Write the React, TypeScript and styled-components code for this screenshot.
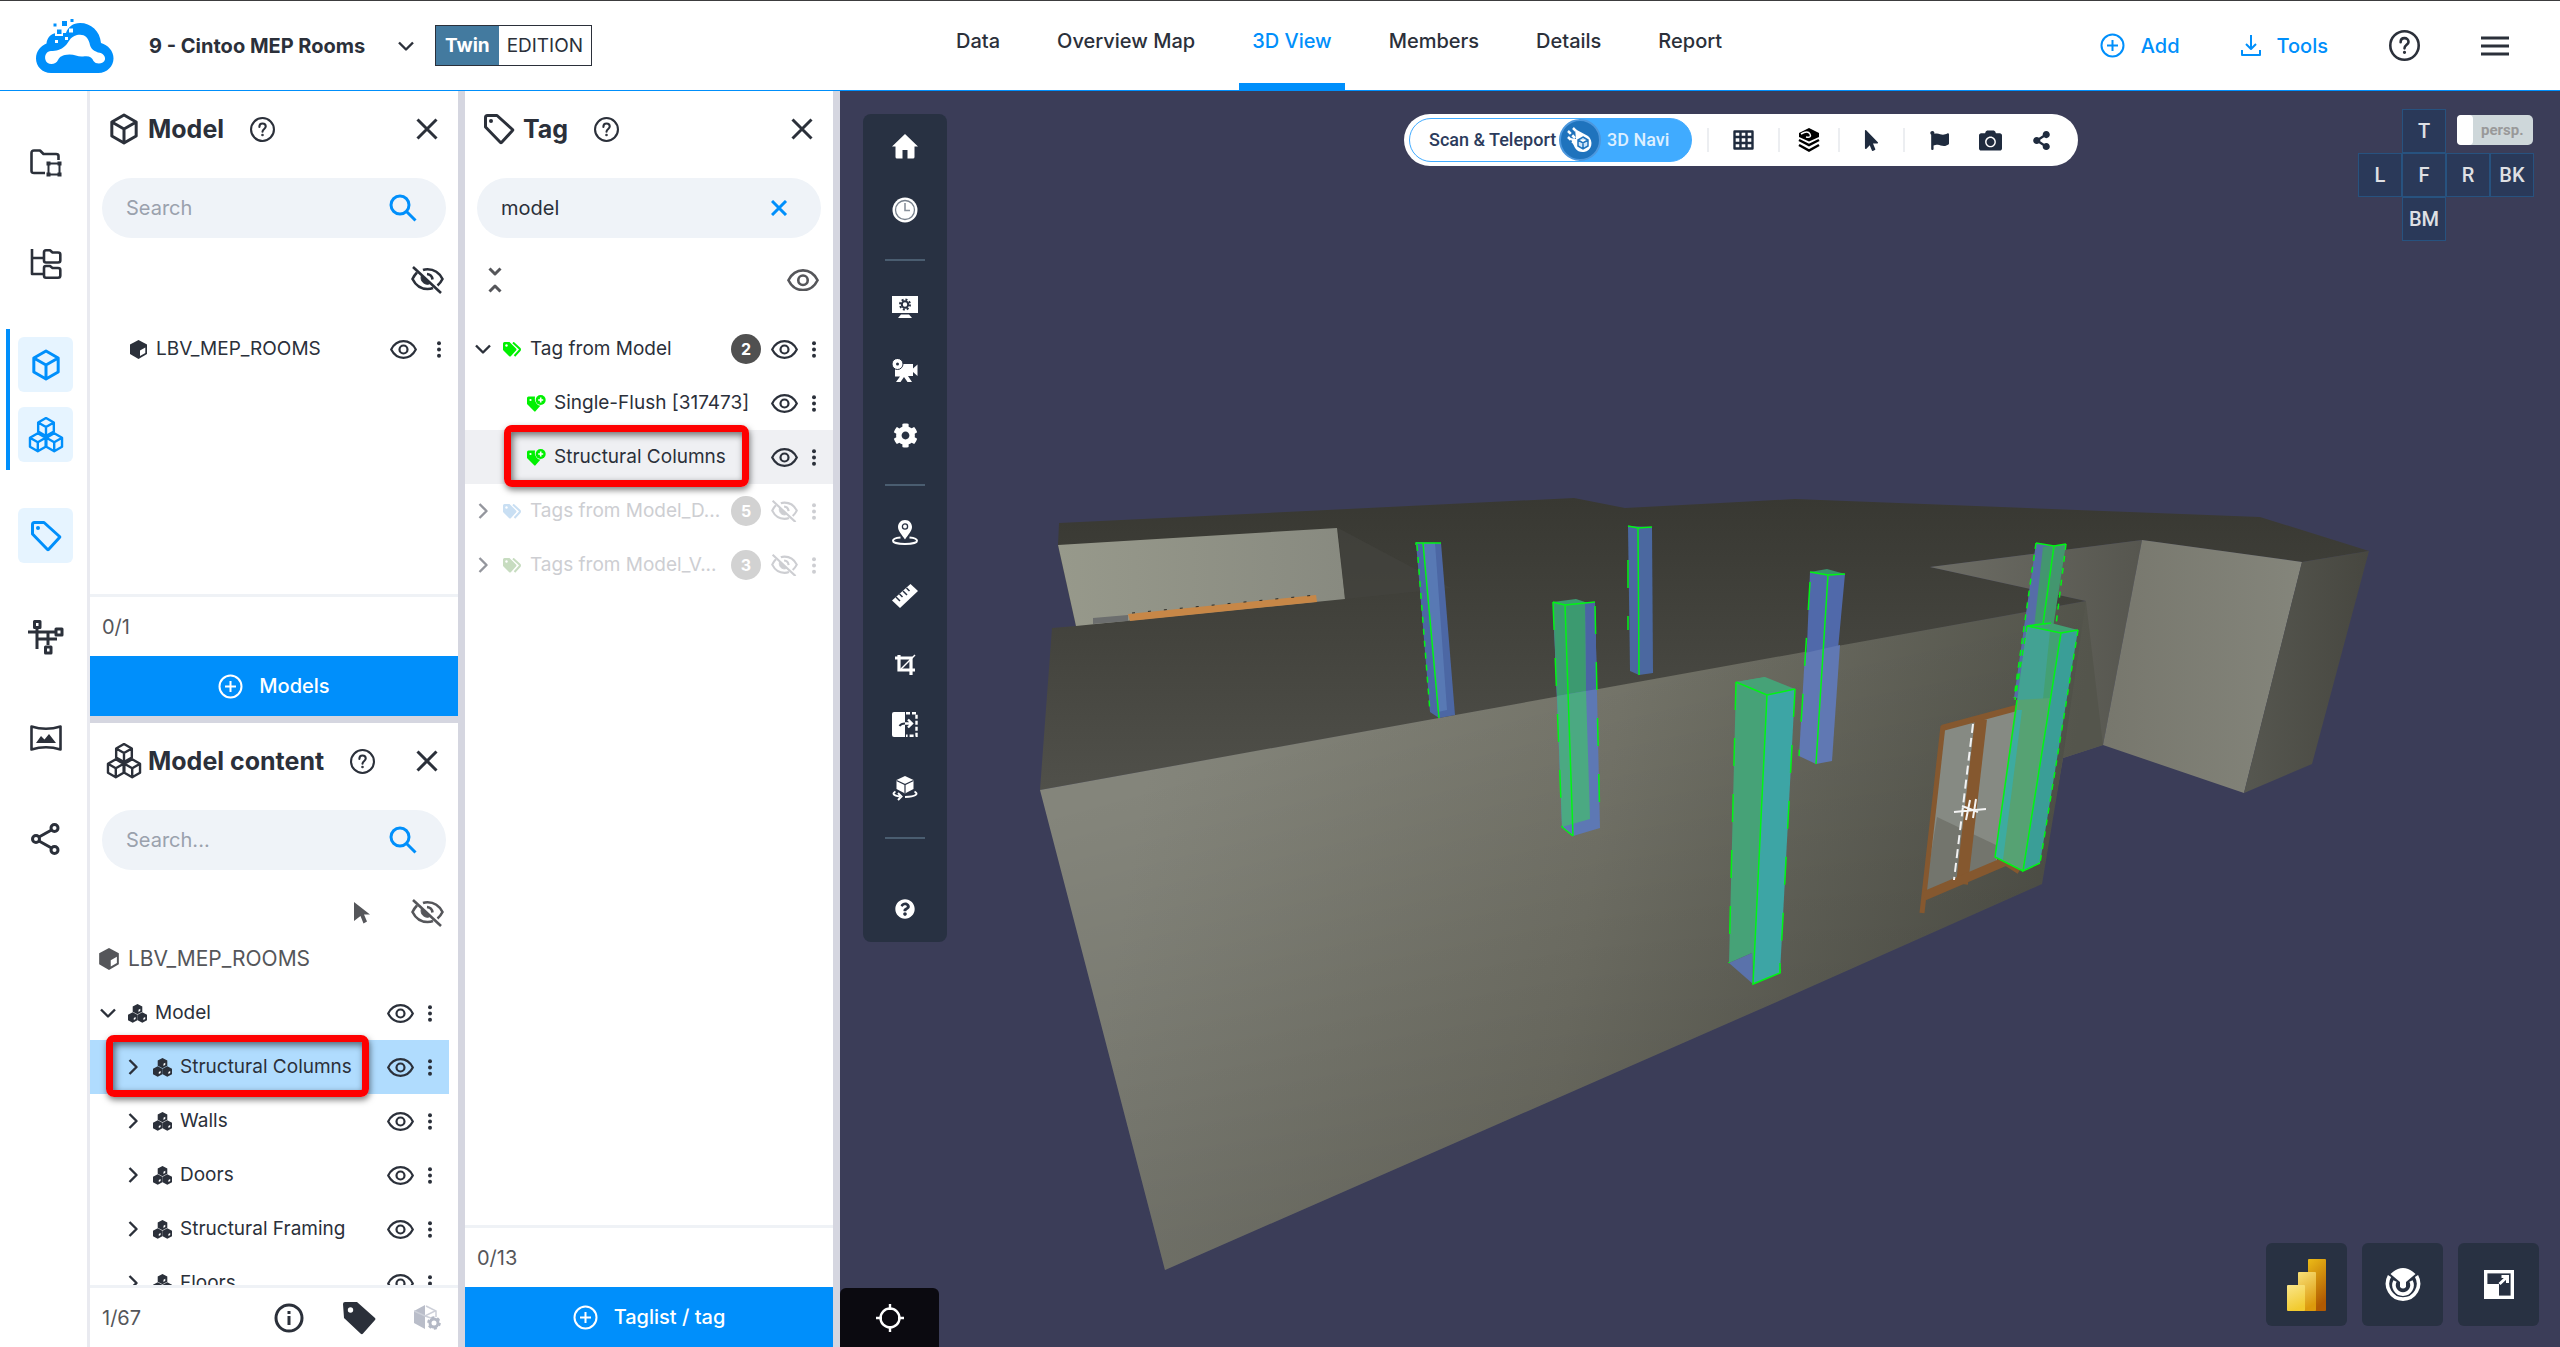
import React from "react";
import styled, { createGlobalStyle, css } from "styled-components";
import { FaCamera, FaCog, FaFlag, FaMousePointer, FaQuestionCircle, FaShareAlt } from "react-icons/fa";

const ink = "#2b303a";
const blue = "#008ffb";
const grey = "#55565a";
const night = "#283142";

const GlobalStyle = createGlobalStyle`
  * { box-sizing: border-box; }
  html, body, #root { height: 100%; }
  body {
    margin: 0;
    background: #fff;
    color: ${ink};
    font-family: Inter, "Open Sans", sans-serif;
    font-size: 19px;
    line-height: 28px;
    overflow: hidden;
  }
  button, input, select { font: inherit; color: inherit; }
  button { border: 0; padding: 0; background: none; cursor: pointer; }
  a { color: inherit; text-decoration: none; }
  svg { display: block; flex: none; }
`;

/* ---------- icons ---------- */

type IconProps = { size?: number; color?: string };
type GlyphProps = { w: number; h: number; stroke?: number; children: React.ReactNode };

const Glyph = ({ w, h, stroke = 2, children }: GlyphProps) => (
  <svg width={w} height={h} viewBox={`0 0 ${w} ${h}`} fill="none" stroke="currentColor" strokeWidth={stroke} strokeLinejoin="round" aria-hidden="true">
    {children}
  </svg>
);

const cubePath = (cx: number, cy: number, r: number) => {
  const w = r * 0.87;
  const h = r / 2;
  return `M${cx} ${cy - r}L${cx + w} ${cy - h}V${cy + h}L${cx} ${cy + r}L${cx - w} ${cy + h}V${cy - h}ZM${cx - w} ${cy - h}L${cx} ${cy}L${cx + w} ${cy - h}M${cx} ${cy}V${cy + r}`;
};

const CubeIcon = () => (
  <Glyph w={30} h={32} stroke={3}><path d={cubePath(15, 16, 14)} /></Glyph>
);
const CubesIcon = () => (
  <Glyph w={36} h={36} stroke={2.4}>
    <path d={cubePath(18, 10, 9)} />
    <path d={cubePath(9.8, 25.3, 9)} />
    <path d={cubePath(26.2, 25.3, 9)} />
  </Glyph>
);
const TagIcon = () => (
  <Glyph w={32} h={32} stroke={3}>
    <path d="M2.500 4.500Q2.500 2.500 4.500 2.500H14L29.500 16.500Q30 17 29.500 17.500L18.500 29.500Q18 30 17.500 29.500L2.500 14Z" />
    <circle cx="8" cy="8" r="2" fill="currentColor" stroke="none" />
  </Glyph>
);
const HelpRing = ({ size = 25 }: IconProps) => (
  <svg width={size} height={size} viewBox="0 0 24 24" fill="none" stroke="currentColor" strokeWidth="2" strokeLinecap="round" aria-hidden="true">
    <circle cx="12" cy="12" r="11" />
    <path d="M9 9.500C9 7.500 10.300 6.300 12 6.300s3.100 1.200 3.100 2.900c0 2.200-3.100 2.400-3.100 5" />
    <circle cx="12" cy="17.300" r="0.500" fill="currentColor" strokeWidth="1.500" />
  </svg>
);
const CloseIcon = ({ size = 22 }: IconProps) => (
  <svg width={size} height={size} viewBox="0 0 22 22" stroke="currentColor" strokeWidth="3" aria-hidden="true"><path d="M1.500 1.500L20.500 20.500M20.500 1.500L1.500 20.500" /></svg>
);
const SearchIcon = () => (
  <Glyph w={28} h={28} stroke={3}><circle cx="11" cy="11" r="9" /><path d="M17.500 17.500L26.500 26.500" /></Glyph>
);
const Eye = ({ size = 27 }: IconProps) => (
  <svg width={size} height={(size * 19) / 27} viewBox="0 0 27 19" fill="none" stroke="currentColor" strokeWidth="2.200" aria-hidden="true">
    <path d="M1.200 9.500C4 4 8.500 1.200 13.500 1.200S23 4 25.800 9.500C23 15 18.500 17.800 13.500 17.800S4 15 1.200 9.500Z" />
    <circle cx="13.500" cy="9.500" r="4" />
  </svg>
);
const EyeOff = ({ size = 33 }: IconProps) => (
  <svg width={size} height={(size * 28) / 33} viewBox="0 0 33 28" fill="none" stroke="currentColor" strokeWidth="2.600" aria-hidden="true">
    <path d="M2 1L30 27" />
    <path d="M6 6.500Q3.500 9 1.500 13C5 20 10.500 23 16.500 23Q19.500 23 22 22M12 4Q14 3.200 16.500 3.200C22.500 3.200 28 6 31.500 13Q29.500 17 26.500 19.500" />
    <path d="M10.500 9.500C9 13 11.500 18.500 17 18.300L19 17.500Z" fill="currentColor" strokeWidth="1" />
    <path d="M16 8Q21 8.500 21.500 13.500" />
  </svg>
);
const Dots = () => (
  <svg width="6" height="17" viewBox="0 0 6 17" fill="currentColor" aria-hidden="true"><circle cx="3" cy="2.200" r="2" /><circle cx="3" cy="8.500" r="2" /><circle cx="3" cy="14.800" r="2" /></svg>
);
const ChevronDown = () => <Glyph w={16} h={10} stroke={2.4}><path d="M1 1.500L8 8.500L15 1.500" /></Glyph>;
const ChevronRight = () => <Glyph w={10} h={16} stroke={2.4}><path d="M1.500 1L8.500 8L1.500 15" /></Glyph>;
const SolidCube = ({ size = 19 }: IconProps) => (
  <svg width={size} height={size} viewBox="0 0 19 19" aria-hidden="true">
    <path d="M9.500 0L18 4.500V14L9.500 19L1 14V4.500Z" fill="currentColor" />
    <path d="M11 10.500L16.300 7.500V13L11 16Z" fill="#fff" />
  </svg>
);
const SolidCubes = () => (
  <svg width="19" height="19" viewBox="0 0 19 19" aria-hidden="true">
    <path d="M9.500 0L14.300 2.500V7.800L9.500 10.300L4.700 7.800V2.500ZM4.700 8.300L9.400 10.800V16.200L4.700 18.800L0 16.200V10.800ZM14.300 8.300L19 10.800V16.200L14.300 18.800L9.600 16.200V10.800Z" fill="currentColor" />
    <path d="M10.500 5.800L12.300 4.700V6.800L10.500 7.900ZM5.800 14L7.600 12.900V15L5.800 16.100ZM15.400 14L17.200 12.900V15L15.400 16.100Z" fill="#fff" />
  </svg>
);
const TagsIcon = ({ color }: IconProps) => (
  <svg width="19" height="15" viewBox="0 0 19 15" aria-hidden="true">
    <path d="M0 1.500Q0 0 1.500 0H6.500L13 6.500Q14 7.500 13 8.500L8 14Q7 15 6 14L0 8Z" fill={color} />
    <circle cx="3.500" cy="3.500" r="1.200" fill="#fff" />
    <path d="M10 0.500L16.500 6.500Q17.500 7.500 16.500 8.500L11.500 14" fill="none" stroke={color} strokeWidth="2" />
  </svg>
);
const PinnedTag = () => (
  <svg width="19" height="17" viewBox="0 0 19 17" aria-hidden="true">
    <path d="M0 3Q0 1.500 1.500 1.500H8Q7 7 11 10Q12 10.500 13.500 10.500L8.500 16.300Q8 17 7.200 16.200L0 9Z" fill="#00f000" />
    <circle cx="13.700" cy="5" r="5" fill="#00f000" />
    <path d="M11.200 5H16.200M13.700 2.500V7.500" stroke="#fff" strokeWidth="1.600" />
    <circle cx="3.500" cy="5" r="1.100" fill="#fff" />
  </svg>
);
const PlusRing = () => <Glyph w={25} h={25}><circle cx="12.500" cy="12.500" r="11" /><path d="M12.500 7V18M7 12.500H18" /></Glyph>;
const Pointer = () => (
  <svg width="16" height="22" viewBox="0 0 16 22" fill="currentColor" aria-hidden="true"><path d="M0 0L16 12.500H10L13 19.500L9.500 21.500L6.500 14L0 19Z" /></svg>
);

const Logo = () => (
  <svg width="78" height="54" viewBox="0 0 78 54" aria-hidden="true">
    <path fill={blue} d="M15 54C6 54 0 47 0 39.500C0 32 5 26.500 10.500 24.500C11 19 14.500 15 20 14L30 14C32 8 37 4 44 4C55 4 64 12 65 24C72 26 77.500 32 77.500 39.500C77.500 47 71 54 62.500 54Z" />
    <path fill="#fff" d="M15 32C20 32 25 31 29 27C33 24 33 18 41 16C48 14.500 52 18 53.500 24C54.500 29 56 31 62 33.500C67 34 69.500 37 69 40.500C68 45 60 46 57.500 42C56 38 53 36.500 47 37.500C42 38 39 35.500 33.500 35.500C26 36 24 37.500 22 41C20 46 11 46.500 9.500 41C8 36 11 32 15 32Z" />
    <path fill="#fff" d="M19 8.500H27V17H19ZM33 9.500h4v4h-4ZM19 21h3v3h-3ZM29 18h3v3h-3ZM24 0h8v8h-8Z" />
    <path fill={blue} d="M26 2h5v5h-5ZM17.500 4.500h3v3h-3ZM34.500 0h3v3h-3ZM21 10.500h4.500v4.500h-4.500Z" />
  </svg>
);

/* ---------- header ---------- */

const Page = styled.div`
  height: 100vh;
  display: grid;
  grid-template-rows: 91px minmax(0, 1fr);
`;
const TopBar = styled.header`
  display: grid;
  grid-template-columns: 943px 1fr auto;
  border-top: 1px solid #3c3c3e;
  border-bottom: 1px solid ${blue};
  background: #fff;
`;
const Brand = styled.div`
  display: flex;
  align-items: center;
  padding-left: 36px;
`;
const ProjectPicker = styled.label`
  display: flex;
  align-items: center;
  gap: 32px;
  margin-left: 35px;
`;
const ProjectSelect = styled.select`
  appearance: none;
  border: 0;
  padding: 0;
  background: none;
  font-size: 20px;
  font-weight: 700;
`;
const Edition = styled.div`
  display: flex;
  margin-left: 21px;
  height: 41px;
  border: 1px solid ${ink};
  line-height: 39px;
`;
const EditionName = styled.strong`
  padding: 0 9px;
  background: #437a9f;
  color: #fff;
  font-weight: 700;
`;
const EditionText = styled.span`
  padding: 0 8px;
`;
const Tabs = styled.nav`
  display: flex;
  gap: 31px;
`;
const Tab = styled.a<{ $active?: boolean }>`
  display: flex;
  align-items: center;
  padding: 0 13px;
  padding-bottom: ${(p) => (p.$active ? 2 : 9)}px;
  font-size: 20px;
  font-weight: 500;
  color: ${(p) => (p.$active ? blue : ink)};
  border-bottom: ${(p) => (p.$active ? `7px solid ${blue}` : "0")};
`;
const TopActions = styled.div`
  display: flex;
  align-items: center;
  padding-right: 51px;
`;
const TopAction = styled.button`
  display: flex;
  align-items: center;
  gap: 16px;
  margin-right: 61px;
  color: ${blue};
  font-size: 20px;
  font-weight: 500;
`;
const TopIcon = styled.button`
  display: flex;
  & + & { margin-left: 61px; }
`;

/* ---------- body ---------- */

const Workspace = styled.div`
  display: grid;
  grid-template-columns: 83px 368px 368px minmax(0, 1fr);
  column-gap: 7px;
  background: #d5d6e0;
  min-height: 0;
`;
const Rail = styled.nav`
  display: flex;
  flex-direction: column;
  align-items: center;
  gap: 46px;
  padding: 44px 0 0 4px;
  margin-right: -7px;
  border-right: 3px solid #e9eaf0;
  background: #fff;
`;
const RailGroup = styled.div`
  position: relative;
  display: flex;
  flex-direction: column;
  gap: 15px;
  &::before {
    content: "";
    position: absolute;
    left: -12px;
    top: -8px;
    bottom: -8px;
    width: 4px;
    background: ${blue};
  }
`;
const RailButton = styled.button<{ $active?: boolean }>`
  display: flex;
  align-items: center;
  justify-content: center;
  width: 55px;
  height: 55px;
  border-radius: 6px;
  color: ${(p) => (p.$active ? blue : ink)};
  background: ${(p) => (p.$active ? "#e6f4ff" : "transparent")};
`;
const Column = styled.div`
  display: flex;
  flex-direction: column;
  gap: 7px;
  min-height: 0;
`;
const Panel = styled.section<{ $height?: number }>`
  display: flex;
  flex-direction: column;
  min-height: 0;
  background: #fff;
  ${(p) => (p.$height ? css`flex: 0 0 ${p.$height}px;` : css`flex: 1;`)}
`;
const PanelHead = styled.header`
  display: flex;
  align-items: center;
  height: 76px;
  padding: 0 20px 0 14px;
`;
const HeadIcon = styled.span`
  display: flex;
  justify-content: center;
  width: 40px;
`;
const PanelTitle = styled.h2`
  margin: 0 26px 0 4px;
  font-size: 25px;
  font-weight: 700;
`;
const CloseButton = styled.button`
  margin-left: auto;
`;
const SearchBox = styled.label`
  display: flex;
  align-items: center;
  height: 60px;
  margin: 11px 12px 0;
  padding: 0 29px 0 24px;
  border-radius: 30px;
  background: #eff3f8;
  color: ${blue};
`;
const SearchInput = styled.input`
  flex: 1;
  min-width: 0;
  border: 0;
  padding: 0;
  outline: 0;
  background: none;
  color: ${ink};
  font-size: 20px;
  &::placeholder { color: #9aa1ad; opacity: 1; }
`;
const Tools = styled.div<{ $short?: boolean }>`
  display: flex;
  align-items: center;
  justify-content: flex-end;
  gap: 41px;
  height: ${(p) => (p.$short ? 62 : 84)}px;
  padding: ${(p) => (p.$short ? "23px 14px 0" : "0 14px")};
  color: ${(p) => (p.$short ? grey : ink)};
`;
const TagTools = styled(Tools)`
  justify-content: space-between;
  padding-left: 23px;
  color: ${grey};
`;
const Tree = styled.div`
  flex: 1;
  min-height: 0;
  overflow: hidden;
`;
const Row = styled.div<{ $indent?: number; $inset?: number; $fill?: string; $dim?: boolean }>`
  position: relative;
  display: flex;
  align-items: center;
  height: 54px;
  margin-right: ${(p) => p.$inset ?? 0}px;
  padding-left: ${(p) => 8 + (p.$indent ?? 0)}px;
  padding-right: 16px;
  background: ${(p) => p.$fill ?? "transparent"};
  color: ${(p) => (p.$dim ? "#cdced2" : ink)};
`;
const Toggle = styled.button<{ $dim?: boolean }>`
  display: flex;
  justify-content: center;
  width: 20px;
  margin-right: 10px;
  color: ${(p) => (p.$dim ? "#94969d" : ink)};
`;
const RowName = styled.span`
  flex: 1;
  min-width: 0;
  margin-left: 8px;
  white-space: nowrap;
`;
const Count = styled.span<{ $dim?: boolean }>`
  width: 30px;
  margin-right: 10px;
  border-radius: 15px;
  background: ${(p) => (p.$dim ? "#d2d2d2" : "#505050")};
  color: #fff;
  font-size: 16px;
  font-weight: 700;
  line-height: 30px;
  text-align: center;
`;
const RowActions = styled.span<{ $wide?: boolean }>`
  display: flex;
  align-items: center;
  gap: ${(p) => (p.$wide ? 19 : 13)}px;
`;
const Highlight = styled.span<{ $left: number; $width: number }>`
  position: absolute;
  left: ${(p) => p.$left}px;
  top: -5px;
  width: ${(p) => p.$width}px;
  height: 62px;
  border: 7px solid #fe0000;
  border-radius: 8px;
  box-shadow: 1px 3px 6px rgba(0, 0, 0, 0.5), inset 2px 3px 7px rgba(0, 0, 0, 0.55);
  z-index: 1;
  pointer-events: none;
`;
const ModelCaption = styled.div`
  display: flex;
  align-items: center;
  gap: 8px;
  height: 54px;
  padding-left: 8px;
  color: ${grey};
  font-size: 21px;
`;
const PanelFoot = styled.footer`
  display: flex;
  align-items: center;
  height: 62px;
  padding: 0 12px;
  border-top: 3px solid #eff2f6;
  color: ${grey};
  font-size: 20px;
`;
const FootActions = styled.div`
  display: flex;
  align-items: center;
  gap: 38px;
  margin-left: auto;
  padding-right: 5px;
  color: ${ink};
`;
const Primary = styled.button`
  display: flex;
  align-items: center;
  justify-content: center;
  gap: 16px;
  height: 60px;
  background: ${blue};
  color: #fff;
  font-size: 20px;
  font-weight: 500;
`;

/* ---------- viewer ---------- */

const Viewer = styled.main`
  position: relative;
  overflow: hidden;
  background: #3b3d58;
  font-family: Roboto, sans-serif;
`;
const Scene = styled.svg`
  position: absolute;
  inset: 0;
  width: 100%;
  height: 100%;
`;
const SideTools = styled.div`
  position: absolute;
  left: 23px;
  top: 23px;
  display: flex;
  flex-direction: column;
  width: 84px;
  border-radius: 8px;
  background: ${night};
  color: #fff;
`;
const SideButton = styled.button`
  display: flex;
  align-items: center;
  justify-content: center;
  height: 64px;
`;
const SideRule = styled.hr`
  width: 40px;
  height: 2px;
  margin: 17px auto 14px;
  border: 0;
  background: #4a5d70;
`;
const SideHelp = styled(SideButton)`
  height: 89px;
  padding-top: 22px;
`;
const ModeBar = styled.div`
  position: absolute;
  left: 564px;
  top: 23px;
  display: flex;
  align-items: center;
  height: 52px;
  padding: 0 3px 0 5px;
  border-radius: 26px;
  background: #fff;
  color: #1f2b3e;
`;
const ModeSwitch = styled.div`
  display: flex;
  align-items: center;
  width: 283px;
  height: 44px;
  margin-right: 15px;
  border: 1px solid #40abff;
  border-radius: 22px;
  background: linear-gradient(90deg, #fff 60%, #40abff 60%);
`;
const ModeButton = styled.button<{ $on?: boolean }>`
  padding-left: ${(p) => (p.$on ? 6 : 19)}px;
  width: ${(p) => (p.$on ? "auto" : "149px")};
  white-space: nowrap;
  text-align: left;
  font-size: 18px;
  font-weight: 500;
  color: ${(p) => (p.$on ? "#dcefff" : "#2b3b5c")};
`;
const ModeKnob = styled.span`
  display: flex;
  align-items: center;
  justify-content: center;
  width: 42px;
  height: 42px;
  border: 2px solid #4c97dd;
  border-radius: 50%;
  background: #1f73bd;
`;
const BarRule = styled.span`
  width: 2px;
  height: 24px;
  background: #eceef1;
`;
const BarButton = styled.button<{ $w: number }>`
  display: flex;
  justify-content: center;
  width: ${(p) => p.$w}px;
`;
const ViewCube = styled.div`
  position: absolute;
  right: 26px;
  top: 18px;
  display: grid;
  grid-template-columns: repeat(4, 44px);
  grid-template-rows: repeat(3, 44px);
`;
const Face = styled.button<{ $col: number; $row: number }>`
  grid-column: ${(p) => p.$col};
  grid-row: ${(p) => p.$row};
  border: 1px solid #27527f;
  background: #2a3959;
  color: #dfe0e4;
  font-size: 20px;
  font-weight: 500;
`;
const Perspective = styled.label`
  grid-column: 3 / span 2;
  grid-row: 1;
  display: flex;
  align-items: center;
  height: 30px;
  margin: 6px 1px 0 11px;
  border-radius: 5px;
  background: #ced7da;
  color: #999;
  font-size: 15px;
  font-weight: 700;
`;
const PerspectiveCheck = styled.input`
  appearance: none;
  width: 16px;
  height: 30px;
  margin: 0 8px 0 0;
  border-radius: 4px;
  background: #fff;
`;
const Locate = styled.button`
  position: absolute;
  left: 0;
  bottom: 0;
  display: flex;
  align-items: center;
  justify-content: center;
  width: 99px;
  height: 59px;
  border-radius: 6px 6px 0 0;
  background: #0b0a10;
  color: #fff;
`;
const CornerTools = styled.div`
  position: absolute;
  right: 21px;
  bottom: 21px;
  display: flex;
  gap: 15px;
`;
const CornerButton = styled.button`
  display: flex;
  align-items: center;
  justify-content: center;
  width: 81px;
  height: 83px;
  border-radius: 6px;
  background: ${night};
  color: #fff;
`;

const Building = () => (
  <Scene viewBox="840 91 1720 1256" preserveAspectRatio="xMidYMid slice" aria-label="3D model of the building" role="img">
    <defs>
      <linearGradient id="roof" x1="0" y1="0" x2="0" y2="1"><stop offset="0" stopColor="#383832" /><stop offset="1" stopColor="#50504a" /></linearGradient>
      <linearGradient id="front" gradientUnits="userSpaceOnUse" x1="1150" y1="750" x2="2050" y2="900"><stop offset="0" stopColor="#84857b" /><stop offset="0.500" stopColor="#747469" /><stop offset="1" stopColor="#54554c" /></linearGradient>
      <linearGradient id="frontShade" gradientUnits="userSpaceOnUse" x1="1300" y1="740" x2="1420" y2="1180"><stop offset="0" stopColor="#000" stopOpacity="0" /><stop offset="1" stopColor="#000" stopOpacity="0.150" /></linearGradient>
      <linearGradient id="back" x1="0" y1="0" x2="1" y2="0"><stop offset="0" stopColor="#97998b" /><stop offset="1" stopColor="#888a80" /></linearGradient>
      <linearGradient id="wing" x1="0" y1="0" x2="1" y2="0"><stop offset="0" stopColor="#6d6d65" /><stop offset="1" stopColor="#56564f" /></linearGradient>
      <linearGradient id="box" x1="0" y1="0" x2="1" y2="0"><stop offset="0" stopColor="#77776d" /><stop offset="1" stopColor="#84857b" /></linearGradient>
      <linearGradient id="side" x1="0" y1="0" x2="1" y2="0"><stop offset="0" stopColor="#565750" /><stop offset="1" stopColor="#474740" /></linearGradient>
    </defs>
    <polygon fill="url(#roof)" points="1059,523 1574,498 1625,508 1720,503 1795,499 2260,517 2369,551 2302,562 2142,540 1930,567 2086,601 1720,668 1040,790 1052,628 1076,626 1058,545" />
    <polygon fill="url(#back)" points="1058,545 1337,528 1345,599 1076,626" />
    <polygon fill="#45453f" opacity="0.600" points="1338,528 1451,588 1345,599" />
    <polygon fill="#6c6e6e" points="1093,618 1128,615 1128,621 1093,624" />
    <polygon fill="#c78747" points="1128,614 1316,595 1317,602 1130,621" />
    <path d="M1132 613L1316 595" stroke="#2e2c26" strokeDasharray="3 13" />
    <polygon fill="url(#wing)" points="1930,567 2142,540 2103,745 2063,758 2050,830 2086,601" />
    <polygon fill="url(#front)" points="1040,790 2086,601 2103,745 2063,758 2042,884 1781,1000 1165,1270" />
    <polygon fill="url(#frontShade)" points="1040,790 2086,601 2063,758 2042,884 1781,1000 1165,1270" />
    <polygon fill="url(#box)" points="2142,540 2302,562 2244,793 2103,745" />
    <polygon fill="url(#side)" points="2302,562 2369,551 2312,764 2244,793" />

    <polygon fill="#868a83" points="1944,728 2017,708 1996,867 1924,898" />
    <polygon fill="#73756d" points="1937,817 1996,845 1996,867 1924,898" />
    <path d="M1942 728L2020 707" stroke="#85582f" strokeWidth="6" />
    <path d="M1943 726L1922 913" stroke="#85582f" strokeWidth="5" />
    <path d="M1981 719L1962 884" stroke="#85582f" strokeWidth="12" />
    <path d="M1924 896L2006 861L2020 870" fill="none" stroke="#85582f" strokeWidth="9" />
    <path d="M1973 724L1954 880" stroke="#f2f2f2" strokeWidth="2" strokeDasharray="9 5" />
    <path d="M1954 812L1986 809M1970 800L1966 820M1976 799L1973 818M1962 806L1978 812" stroke="#f4f4f4" strokeWidth="2" />

    <g stroke="none">
      <polygon fill="#4c67a4" points="1416,542 1441,543 1455,715 1439,718 1430,712" />
      <polygon fill="#5879b4" points="1423,543 1435,543 1447,710 1438,712" />
      <polygon fill="#4b68a0" points="1628,526 1652,527 1653,673 1639,675 1630,671" />
      <polygon fill="#5069aa" points="1810,572 1845,574 1837,660 1806,670" />
      <polygon fill="#6078b3" points="1840,645 1832,761 1816,764 1799,756 1805,653" />
      <polygon fill="#38936b" points="1810,572 1827,569 1845,574 1828,576" />
      <polygon fill="#5d78b4" points="1553,602 1595,602 1600,828 1573,836 1562,827" />
      <polygon fill="#4b64a4" points="1585,602 1595,602 1597,689 1586,691" />
      <polygon fill="#3c9a70" points="1553,602 1576,599 1585,602 1586,691 1557,696" />
      <polygon fill="#4ba982" points="1557,696 1586,691 1590,819 1562,827" />
      <polygon fill="#46a277" points="1736,682 1765,677 1767,695 1753,984 1752,953 1729,963" />
      <polygon fill="#5a72ab" points="1729,963 1752,953 1753,984" />
      <polygon fill="#3da5a5" points="1767,695 1795,689 1780,973 1753,984" />
      <polygon fill="#46a277" points="1736,682 1765,677 1795,689 1767,695" />
      <polygon fill="#566da8" points="2036,543 2054,546 2043,630 2045,698 2014,698" />
      <polygon fill="#43966f" points="2043,547 2066,544 2053,628 2034,628" />
      <polygon fill="#43a074" points="2027,626 2051,623 2078,630 2061,633 2051,700 2017,702" />
      <polygon fill="#43a293" points="2027,626 2050,631 2043,699 2017,702" />
      <polygon fill="#56a273" points="2017,700 2051,698 2023,871 1995,857" />
      <polygon fill="#3daba0" points="2017,710 2022,710 2003,860 1995,857" />
      <polygon fill="#3a9e97" points="2061,633 2078,630 2040,863 2023,871" />
    </g>
    <g fill="none" stroke="#00f514" strokeWidth="1.500">
      <path d="M1416 545V543H1441M1423 543L1439 718M1628 526L1638 528L1652 527M1638 528L1639 675" />
      <path d="M1553 602L1565 605L1595 602M1565 605L1573 836M1810 572L1828 575L1845 574M1828 575L1816 764" />
      <path d="M1736 682L1767 695L1795 689M1767 695L1753 984L1780 973V963M2036 543L2054 546L2066 544M2054 546L2043 624" />
      <path d="M2027 626L2051 623M2027 626L2061 633L2078 630M2061 633L2023 871L2040 863M2017 700L1995 857L2023 871" />
      <path strokeDasharray="6 6" d="M1417 545L1430 712M2036 543L2014 698M2066 544L2056 625M2078 630L2040 863M2027 626L2015 700" />
      <path strokeDasharray="28 28" d="M1628 560V630M1553 602L1562 827L1573 836M1595 606L1600 828M1810 582L1799 756M1736 682L1729 963M1795 689L1780 973" />
    </g>
  </Scene>
);

const sideIcons = {
  home: (
    <svg width="26" height="25" viewBox="0 0 26 25" aria-hidden="true"><path d="M13 0L26 12.500H22.500V23Q22.500 24.500 21 24.500H15.500V16H10.500V24.500H5Q3.500 24.500 3.500 23V12.500H0Z" fill="#fff" /></svg>
  ),
  clock: (
    <svg width="26" height="26" viewBox="0 0 26 26" aria-hidden="true"><circle cx="13" cy="13" r="12.500" fill="#fff" /><circle cx="13" cy="13" r="9.500" fill="none" stroke="#77808c" strokeWidth="1.300" /><path d="M13 6V13.500H18" fill="none" stroke="#8a929c" strokeWidth="1.600" /></svg>
  ),
  monitor: (
    <svg width="26" height="22" viewBox="0 0 26 22" aria-hidden="true"><path d="M0 0H26V17H0ZM9 18.500H17L20 22H6Z" fill="#fff" /><circle cx="13" cy="8.500" r="3.200" fill="none" stroke={night} strokeWidth="2" /><circle cx="13" cy="8.500" r="5" fill="none" stroke={night} strokeWidth="2" strokeDasharray="2 1.900" /></svg>
  ),
  camera: (
    <svg width="26" height="24" viewBox="0 0 26 24" fill="#fff" aria-hidden="true"><path d="M3 5H21V9.500L25.500 5.500V17L21 13V17H16L20 23H15.500L12 18L8.500 23H4L8 17.500H3Z" /><circle cx="5.500" cy="5" r="5.500" stroke={night} strokeWidth="1" /><circle cx="5.500" cy="5" r="1.500" fill={night} /></svg>
  ),
  pin: (
    <svg width="26" height="25" viewBox="0 0 26 25" aria-hidden="true"><path d="M13 0C8.500 0 6 3.500 6 7C6 11 10 15 13 19.500C16 15 20 11 20 7C20 3.500 17.500 0 13 0Z" fill="#fff" /><circle cx="13" cy="6.500" r="2.600" fill="none" stroke={night} strokeWidth="1.300" /><path d="M8.500 17.500C3 18 1 19.500 1 20.700C1 22.500 6 24 13 24S25 22.500 25 20.700C25 19.500 23 18 17.500 17.500" fill="none" stroke="#fff" strokeWidth="2" /></svg>
  ),
  ruler: (
    <svg width="26" height="26" viewBox="0 0 26 26" aria-hidden="true"><path d="M0 17.500L18.500 1L26 8L8 25Z" fill="#fff" /><path d="M4 14L8 18M7.500 11L10.500 14M11 8L15 12M14.500 5L17.500 8" stroke={night} strokeWidth="1.500" /></svg>
  ),
  crop: (
    <svg width="26" height="30" viewBox="0 0 26 30" fill="none" stroke="#fff" strokeWidth="3.200" aria-hidden="true"><path d="M7 10V25H23M3 13H19V30" /><path d="M9 24L23 10" strokeWidth="1.500" /></svg>
  ),
  slab: (
    <svg width="26" height="25" viewBox="0 0 26 25" aria-hidden="true"><path d="M2 0H13V25H2Q0 25 0 23V2Q0 0 2 0Z" fill="#fff" /><path d="M14 1.200H24.500V23.800H14" fill="none" stroke="#fff" strokeWidth="2.400" strokeDasharray="4 2" /><path d="M7.500 14Q9 11.500 13 11.500" fill="none" stroke={night} strokeWidth="2" /><path d="M13 11.500H19M16 7.500L20 11.500L16 15.500" fill="none" stroke="#fff" strokeWidth="2.400" /></svg>
  ),
  spin: (
    <svg width="26" height="25" viewBox="0 0 26 25" aria-hidden="true"><path d="M13 0L21.500 4V13L13 17.500L4.500 13V4Z" fill="#fff" /><path d="M4.500 4.500L13 8.500L21.500 4.500M13 8.500V17.500" fill="none" stroke={night} strokeWidth="1.200" /><path d="M3.500 15.500C0 17.500 1 19.500 8 20.500M6 17L9.500 20.500L6 24M22.500 15.500C27 18 24 20.500 13 21" fill="none" stroke="#fff" strokeWidth="2" /></svg>
  ),
};

const FolderIcon = () => (
  <Glyph w={32} h={28} stroke={2.6}><path d="M15 24H4Q1.500 24 1.500 22V4Q1.500 1.500 4 1.500H10L13.500 5H26Q28.500 5 28.500 7V11" /><path d="M18.500 14.500H29.500V25.500H18.500Z" strokeWidth="2" /><path d="M16.500 14.500H20.500M27.500 14.500H31.500M16.500 25.500H20.500M27.500 25.500H31.500" strokeWidth="4" /></Glyph>
);
const FolderTreeIcon = () => (
  <Glyph w={32} h={30} stroke={2.6}><path d="M2 0V25H14M2 9H14M14 3.500Q14 1.300 16 1.300H20L22.500 3.500H28Q30.300 3.500 30.300 5.500V11.500Q30.300 13.500 28 13.500H16Q14 13.500 14 11.500ZM14 19Q14 17 16 17H20L22.500 19H28Q30.300 19 30.300 21V26.500Q30.300 28.700 28 28.700H16Q14 28.700 14 26.500Z" /></Glyph>
);
const NetworkIcon = () => (
  <Glyph w={36} h={36} stroke={3}><path d="M0 13H27M9 9V30M20 14V26M9 20H29M6.500 2.500H12V8.500H6.500ZM28 10H34V16H28ZM17.500 28H23V34H17.500Z" /></Glyph>
);
const PanoramaIcon = () => (
  <Glyph w={32} h={26} stroke={2.6}><path d="M1.500 1.500Q16 6 30.500 1.500V24.500Q16 20 1.500 24.500Z" /><path d="M6 18L11 11L14.500 14.500L19 9L26 18Z" fill="currentColor" stroke="none" /></Glyph>
);
const NodesIcon = () => (
  <Glyph w={30} h={32} stroke={3}><circle cx="5" cy="16" r="3.500" /><circle cx="23.500" cy="5" r="3.500" /><circle cx="23.500" cy="27" r="3.500" /><path d="M8 14L20.500 7M8 18L20.500 25" /></Glyph>
);

type TreeItem = { name: string; depth: number; open?: boolean; selected?: boolean };
const modelTree: TreeItem[] = [
  { name: "Model", depth: 0, open: true },
  { name: "Structural Columns", depth: 1, selected: true },
  { name: "Walls", depth: 1 },
  { name: "Doors", depth: 1 },
  { name: "Structural Framing", depth: 1 },
  { name: "Floors", depth: 1 },
];
const dimTags = [
  { name: "Tags from Model_D...", count: 5, color: "#c9dff3" },
  { name: "Tags from Model_V...", count: 3, color: "#c7dcc0" },
];
const tabs = ["Data", "Overview Map", "3D View", "Members", "Details", "Report"];

const Actions = ({ wide, hidden }: { wide?: boolean; hidden?: boolean }) => (
  <RowActions $wide={wide}>
    <button aria-label={hidden ? "Show" : "Hide"}>{hidden ? <EyeOff size={27} /> : <Eye />}</button>
    <button aria-label="More"><Dots /></button>
  </RowActions>
);

const Head = ({ icon, title }: { icon: React.ReactNode; title: string }) => (
  <PanelHead>
    <HeadIcon>{icon}</HeadIcon>
    <PanelTitle>{title}</PanelTitle>
    <button aria-label={`${title} help`}><HelpRing /></button>
    <CloseButton aria-label={`Close ${title}`}><CloseIcon /></CloseButton>
  </PanelHead>
);

export default function App() {
  return (
    <Page>
      <GlobalStyle />
      <TopBar>
        <Brand>
          <Logo />
          <ProjectPicker>
            <ProjectSelect aria-label="Project"><option>9 - Cintoo MEP Rooms</option></ProjectSelect>
            <ChevronDown />
          </ProjectPicker>
          <Edition><EditionName>Twin</EditionName><EditionText>EDITION</EditionText></Edition>
        </Brand>
        <Tabs>
          {tabs.map((t) => <Tab key={t} href="#" $active={t === "3D View"}>{t}</Tab>)}
        </Tabs>
        <TopActions>
          <TopAction><PlusRing />Add</TopAction>
          <TopAction>
            <Glyph w={20} h={22}><path d="M10 0V14M5 9L10 14L15 9M1 15V20H19V15" /></Glyph>Tools
          </TopAction>
          <TopIcon aria-label="Help"><HelpRing size={31} /></TopIcon>
          <TopIcon aria-label="Menu"><Glyph w={28} h={20} stroke={3}><path d="M0 2H28M0 10H28M0 18H28" /></Glyph></TopIcon>
        </TopActions>
      </TopBar>

      <Workspace>
        <Rail>
          <RailButton aria-label="Projects"><FolderIcon /></RailButton>
          <RailButton aria-label="Work zones"><FolderTreeIcon /></RailButton>
          <RailGroup>
            <RailButton $active aria-label="Models"><CubeIcon /></RailButton>
            <RailButton $active aria-label="Model content"><CubesIcon /></RailButton>
          </RailGroup>
          <RailButton $active aria-label="Tags"><TagIcon /></RailButton>
          <RailButton aria-label="Networks"><NetworkIcon /></RailButton>
          <RailButton aria-label="Panoramas"><PanoramaIcon /></RailButton>
          <RailButton aria-label="Share"><NodesIcon /></RailButton>
        </Rail>

        <Column>
          <Panel $height={625}>
            <Head icon={<CubeIcon />} title="Model" />
            <SearchBox><SearchInput placeholder="Search" aria-label="Search models" /><SearchIcon /></SearchBox>
            <Tools><button aria-label="Hide all"><EyeOff /></button></Tools>
            <Tree>
              <Row $indent={31}>
                <SolidCube /><RowName>LBV_MEP_ROOMS</RowName><Actions wide />
              </Row>
            </Tree>
            <PanelFoot>0/1</PanelFoot>
            <Primary><PlusRing />Models</Primary>
          </Panel>
          <Panel>
            <Head icon={<CubesIcon />} title="Model content" />
            <SearchBox><SearchInput placeholder="Search..." aria-label="Search model content" /><SearchIcon /></SearchBox>
            <Tools $short>
              <button aria-label="Select"><Pointer /></button>
              <button aria-label="Hide all"><EyeOff /></button>
            </Tools>
            <ModelCaption><SolidCube size={22} />LBV_MEP_ROOMS</ModelCaption>
            <Tree>
              {modelTree.map((item) => (
                <Row key={item.name} $indent={item.depth * 25} $inset={9} $fill={item.selected ? "#b0dcfe" : undefined}>
                  <Toggle aria-label={`Toggle ${item.name}`}>{item.open ? <ChevronDown /> : <ChevronRight />}</Toggle>
                  <SolidCubes />
                  <RowName>{item.name}</RowName>
                  <Actions />
                  {item.selected && <Highlight $left={16} $width={263} />}
                </Row>
              ))}
            </Tree>
            <PanelFoot>
              1/67
              <FootActions>
                <button aria-label="Information">
                  <Glyph w={30} h={30} stroke={3}><circle cx="15" cy="15" r="13" /><path d="M15 13V22M15 8V11" /></Glyph>
                </button>
                <button aria-label="Tag selection">
                  <svg width="34" height="34" viewBox="0 0 34 34" aria-hidden="true"><path d="M1 3Q1 1 3 1H15L33 17Q34 18 33 19L21 32.500Q20 34 18.500 32.500L2 17Z" fill={ink} /><circle cx="8.500" cy="9" r="2.700" fill="#fff" /></svg>
                </button>
                <button aria-label="Model settings" disabled>
                  <svg width="27" height="25" viewBox="0 0 27 25" aria-hidden="true"><path d="M11 0V24L0 18V6Z" fill="#b9bdc9" /><path d="M0 6L11 11L21 6M12 1L22 6V12M11 11L20 14" fill="none" stroke="#cdd0d9" strokeWidth="1.500" /><circle cx="20" cy="18" r="4" fill="none" stroke="#b3b8c5" strokeWidth="3" /><circle cx="20" cy="18" r="5.800" fill="none" stroke="#b3b8c5" strokeWidth="2" strokeDasharray="3 3" /></svg>
                </button>
              </FootActions>
            </PanelFoot>
          </Panel>
        </Column>

        <Column>
          <Panel>
            <Head icon={<TagIcon />} title="Tag" />
            <SearchBox>
              <SearchInput defaultValue="model" aria-label="Search tags" />
              <button aria-label="Clear search"><Glyph w={21} h={16} stroke={3}><path d="M1 1L15 15M15 1L1 15" stroke={blue} /></Glyph></button>
            </SearchBox>
            <TagTools>
              <button aria-label="Collapse all"><Glyph w={14} h={26} stroke={3}><path d="M1.500 1.500L7 7L12.500 1.500M1.500 24.500L7 19L12.500 24.500" /></Glyph></button>
              <button aria-label="Hide all"><Eye size={32} /></button>
            </TagTools>
            <Tree>
              <Row>
                <Toggle aria-label="Toggle Tag from Model"><ChevronDown /></Toggle>
                <TagsIcon color="#00f000" />
                <RowName>Tag from Model</RowName>
                <Count>2</Count>
                <Actions />
              </Row>
              <Row $indent={54}><PinnedTag /><RowName>Single-Flush [317473]</RowName><Actions /></Row>
              <Row $indent={54} $fill="#eff0f3">
                <PinnedTag /><RowName>Structural Columns</RowName><Actions />
                <Highlight $left={39} $width={245} />
              </Row>
              {dimTags.map((t) => (
                <Row key={t.name} $dim>
                  <Toggle $dim aria-label={`Toggle ${t.name}`}><ChevronRight /></Toggle>
                  <TagsIcon color={t.color} />
                  <RowName>{t.name}</RowName>
                  <Count $dim>{t.count}</Count>
                  <Actions hidden />
                </Row>
              ))}
            </Tree>
            <PanelFoot>0/13</PanelFoot>
            <Primary><PlusRing />Taglist / tag</Primary>
          </Panel>
        </Column>

        <Viewer>
          <Building />
          <SideTools>
            <SideButton aria-label="Home">{sideIcons.home}</SideButton>
            <SideButton aria-label="History">{sideIcons.clock}</SideButton>
            <SideRule />
            <SideButton aria-label="Display settings">{sideIcons.monitor}</SideButton>
            <SideButton aria-label="Camera settings">{sideIcons.camera}</SideButton>
            <SideButton aria-label="Settings"><FaCog size={25} /></SideButton>
            <SideRule />
            <SideButton aria-label="Position">{sideIcons.pin}</SideButton>
            <SideButton aria-label="Measure">{sideIcons.ruler}</SideButton>
            <SideButton aria-label="Crop">{sideIcons.crop}</SideButton>
            <SideButton aria-label="Compare">{sideIcons.slab}</SideButton>
            <SideButton aria-label="Rotate model">{sideIcons.spin}</SideButton>
            <SideRule />
            <SideHelp aria-label="Help"><FaQuestionCircle size={20} /></SideHelp>
          </SideTools>

          <ModeBar>
            <ModeSwitch>
              <ModeButton>Scan &amp; Teleport</ModeButton>
              <ModeKnob>
                <svg width="28" height="28" viewBox="0 0 28 28" aria-hidden="true"><path d="M9 3L22 10C28 15 26 25 18 26C11 27 8 21 7 17L4 12L10 13Z" fill="#fff" /><path d="M2 5L11 14M2 11L9 18M7 2L14 9" stroke="#fff" strokeWidth="2.500" strokeDasharray="4 2" /><path d="M17 11L22 14V20L17 23L12 20V14ZM12 14L17 17L22 14M17 17V23" fill="#cfe4f8" stroke="#1f73bd" strokeWidth="1.500" /></svg>
              </ModeKnob>
              <ModeButton $on>3D Navi</ModeButton>
            </ModeSwitch>
            <BarRule />
            <BarButton $w={69} aria-label="Grid">
              <Glyph w={21} h={20} stroke={2.4}><path d="M1.500 1.500H19.500V18.500H1.500ZM7.500 1V19M13.500 1V19M1 7H20M1 13H20" /></Glyph>
            </BarButton>
            <BarRule />
            <BarButton $w={58} aria-label="Layers">
              <svg width="22" height="24" viewBox="0 0 22 24" aria-hidden="true"><path d="M11 0L21 5V9L11 13.500L1 9V5Z" fill="#000" /><path d="M3 6Q10 2 12 6T8 9" fill="none" stroke="#fff" strokeWidth="1.500" /><path d="M1 12L11 17L21 12M1 17L11 22.500L21 17" fill="none" stroke="#000" strokeWidth="2.500" /></svg>
            </BarButton>
            <BarRule />
            <BarButton $w={63} aria-label="Select"><FaMousePointer size={21} /></BarButton>
            <BarRule />
            <BarButton $w={68} aria-label="Flag"><FaFlag size={19} /></BarButton>
            <BarButton $w={34} aria-label="Snapshot"><FaCamera size={23} /></BarButton>
            <BarButton $w={68} aria-label="Share"><FaShareAlt size={19} /></BarButton>
          </ModeBar>

          <ViewCube>
            <Face $col={2} $row={1}>T</Face>
            <Perspective><PerspectiveCheck type="checkbox" />persp.</Perspective>
            <Face $col={1} $row={2}>L</Face>
            <Face $col={2} $row={2}>F</Face>
            <Face $col={3} $row={2}>R</Face>
            <Face $col={4} $row={2}>BK</Face>
            <Face $col={2} $row={3}>BM</Face>
          </ViewCube>

          <Locate aria-label="Locate">
            <Glyph w={28} h={28} stroke={2.4}><circle cx="14" cy="14" r="9.500" /><path d="M14 0V6M14 22V28M0 14H6M22 14H28" /></Glyph>
          </Locate>

          <CornerTools>
            <CornerButton aria-label="Power BI">
              <svg width="39" height="52" viewBox="0 0 39 52" aria-hidden="true">
                <defs>
                  <linearGradient id="b1" x1="0" y1="0" x2="0.300" y2="1"><stop offset="0" stopColor="#ecbb17" /><stop offset="1" stopColor="#b05a02" /></linearGradient>
                  <linearGradient id="b2" x1="0" y1="0" x2="0.300" y2="1"><stop offset="0" stopColor="#f9e178" /><stop offset="1" stopColor="#dc9a0c" /></linearGradient>
                  <linearGradient id="b3" x1="0" y1="0" x2="0.300" y2="1"><stop offset="0" stopColor="#fae68a" /><stop offset="1" stopColor="#f2cb30" /></linearGradient>
                </defs>
                <rect x="21" y="0" width="18" height="52" rx="1" fill="url(#b1)" />
                <rect x="11" y="13" width="18" height="39" rx="1" fill="url(#b2)" />
                <rect x="0" y="26" width="18" height="26" rx="1" fill="url(#b3)" />
              </svg>
            </CornerButton>
            <CornerButton aria-label="Field of view">
              <svg width="36" height="34" viewBox="0 0 36 34" fill="none" stroke="#fff" strokeWidth="3.600" aria-hidden="true">
                <path d="M4.500 8A15.500 15.500 0 1 0 31.500 8M10 13A9 9 0 1 0 26 13" />
                <path d="M5.500 6Q18 -6 30.500 6L21 14V19Q18 22 15 19V14Z" fill="#fff" stroke="none" />
              </svg>
            </CornerButton>
            <CornerButton aria-label="Expand">
              <svg width="30" height="29" viewBox="0 0 30 29" fill="none" stroke="#fff" strokeWidth="3.400" aria-hidden="true">
                <rect x="1.700" y="1.700" width="26.600" height="25.600" /><rect x="2" y="14" width="13" height="13" fill="#fff" stroke="none" /><path d="M15.500 14L23 7M17.500 6.500H23.500V13" strokeWidth="3" />
              </svg>
            </CornerButton>
          </CornerTools>
        </Viewer>
      </Workspace>
    </Page>
  );
}
